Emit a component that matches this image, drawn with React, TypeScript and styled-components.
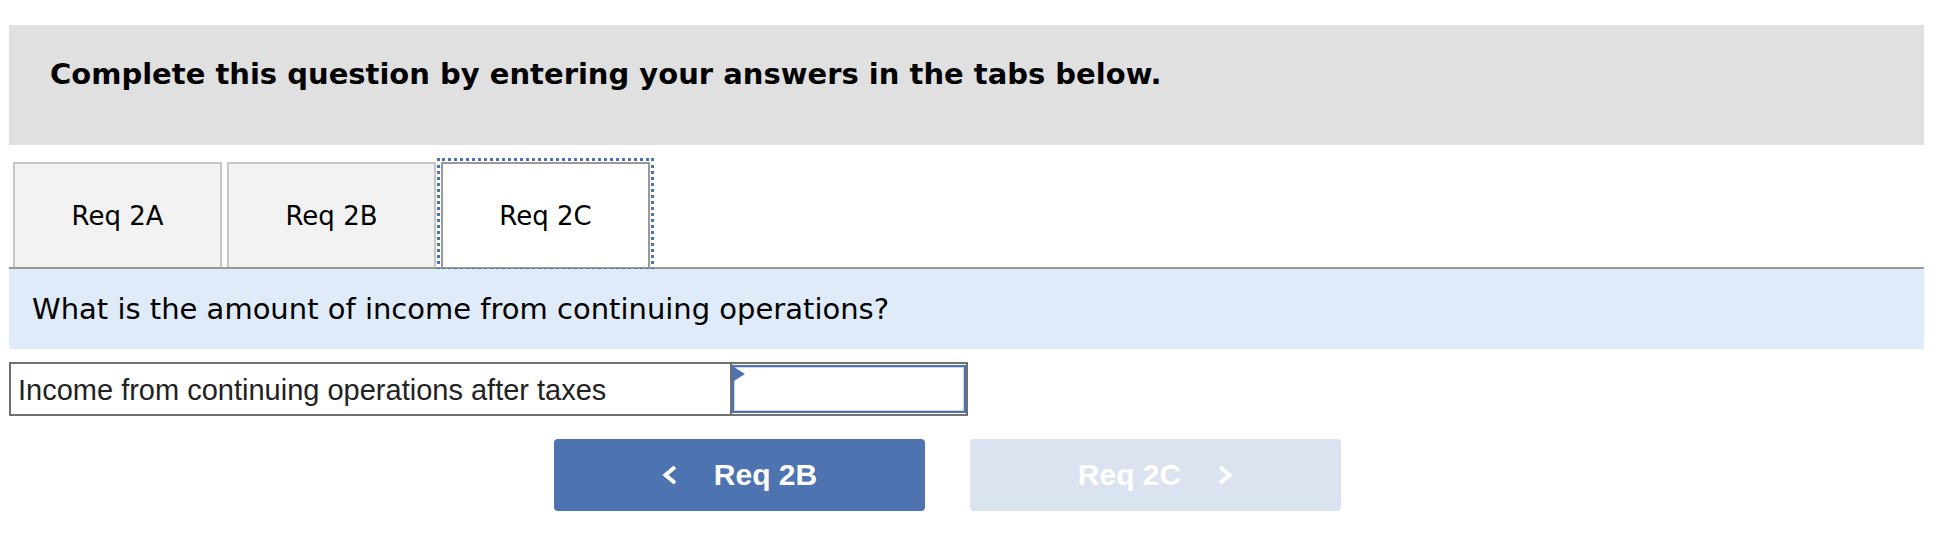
import React, { FC } from 'react';
import styled, { createGlobalStyle } from 'styled-components';

const GlobalStyle = createGlobalStyle`
	body {
		margin: 0;
		background: #ffffff;
		font-family: Verdana, 'DejaVu Sans', sans-serif;
	}
`;

const Root = styled.div`
	padding: 25px 28px 24px 9px;
	display: flex;
	flex-direction: column;
`;

const Instructions = styled.div`
	box-sizing: border-box;
	height: 120px;
	padding: 32px 0 0 41px;
	background: #e0e0e0;
	font-size: 29px;
	font-weight: bold;
	line-height: 35px;
	color: #000;
`;

const TabBar = styled.div`
	margin-top: 17px;
	display: flex;
	gap: 5px;
	padding-left: 4px;
	border-bottom: 2px solid #999999;
`;

const Tab = styled.div<{ $active?: boolean }>`
	box-sizing: border-box;
	width: 209px;
	height: 105px;
	display: flex;
	align-items: center;
	justify-content: center;
	border: 2px solid ${(p) => (p.$active ? '#999999' : '#c6c6c6')};
	border-bottom: none;
	background: ${(p) => (p.$active ? '#ffffff' : '#f2f2f2')};
	font-size: 26px;
	color: #000;
	outline: ${(p) => (p.$active ? '3px dotted #4a72b8' : 'none')};
	outline-offset: 1px;
`;

const Question = styled.div`
	height: 80px;
	display: flex;
	align-items: center;
	padding-left: 23px;
	background: #dfebf8;
	font-size: 29px;
	color: #000;
`;

const AnswerRow = styled.div`
	margin-top: 13px;
	box-sizing: border-box;
	width: 959px;
	height: 54px;
	display: flex;
	border: 2px solid #707070;
`;

const AnswerLabel = styled.div`
	flex: 1;
	display: flex;
	align-items: center;
	padding: 2px 0 0 7px;
	font-family: 'Liberation Sans', Arial, sans-serif;
	font-size: 29px;
	color: #222;
`;

const AnswerCell = styled.div`
	position: relative;
	box-sizing: border-box;
	width: 236px;
	padding: 1px 0;
	border-left: 2px solid #707070;
`;

const AnswerInput = styled.input`
	box-sizing: border-box;
	display: block;
	width: 100%;
	height: 100%;
	margin: 0;
	border: 2px solid #4f73b0;
	box-shadow: inset 0 0 0 1px #c9d6ec;
	background: #fff;
	outline: none;
`;

const CornerMark = styled.span`
	position: absolute;
	left: 2px;
	top: 3px;
	width: 0;
	height: 0;
	border-top: 7px solid transparent;
	border-bottom: 7px solid transparent;
	border-left: 11px solid #4f73b0;
`;

const NavRow = styled.div`
	margin-top: 23px;
	padding-left: 545px;
	display: flex;
	gap: 45px;
`;

const NavButton = styled.button<{ $disabled?: boolean }>`
	width: 371px;
	height: 72px;
	display: flex;
	align-items: center;
	justify-content: center;
	gap: 37px;
	padding: 0;
	border: none;
	border-radius: 4px;
	background: ${(p) => (p.$disabled ? '#dae3ef' : '#4e73b1')};
	color: #fff;
	font-family: 'Liberation Sans', Arial, sans-serif;
	font-size: 30px;
	font-weight: bold;
	cursor: ${(p) => (p.$disabled ? 'default' : 'pointer')};

	svg {
		flex: none;
	}
`;

const Chevron: FC<{ dir: 'left' | 'right' }> = ({ dir }) => (
	<svg width="15" height="20" viewBox="0 0 15 20">
		<path
			d={dir === 'left' ? 'M13 2 L3.5 10 L13 18' : 'M2 2 L11.5 10 L2 18'}
			fill="none"
			stroke="#fff"
			strokeWidth="4"
			strokeLinejoin="miter"
		/>
	</svg>
);

const App: FC = () => {
	return (
		<Root>
			<GlobalStyle />
			<Instructions>Complete this question by entering your answers in the tabs below.</Instructions>
			<TabBar>
				<Tab>Req 2A</Tab>
				<Tab>Req 2B</Tab>
				<Tab $active>Req 2C</Tab>
			</TabBar>
			<Question>What is the amount of income from continuing operations?</Question>
			<AnswerRow>
				<AnswerLabel>Income from continuing operations after taxes</AnswerLabel>
				<AnswerCell>
					<AnswerInput type="text" />
					<CornerMark />
				</AnswerCell>
			</AnswerRow>
			<NavRow>
				<NavButton>
					<Chevron dir="left" />
					<span>Req 2B</span>
				</NavButton>
				<NavButton $disabled disabled>
					<span>Req 2C</span>
					<Chevron dir="right" />
				</NavButton>
			</NavRow>
		</Root>
	);
};

export default App;
